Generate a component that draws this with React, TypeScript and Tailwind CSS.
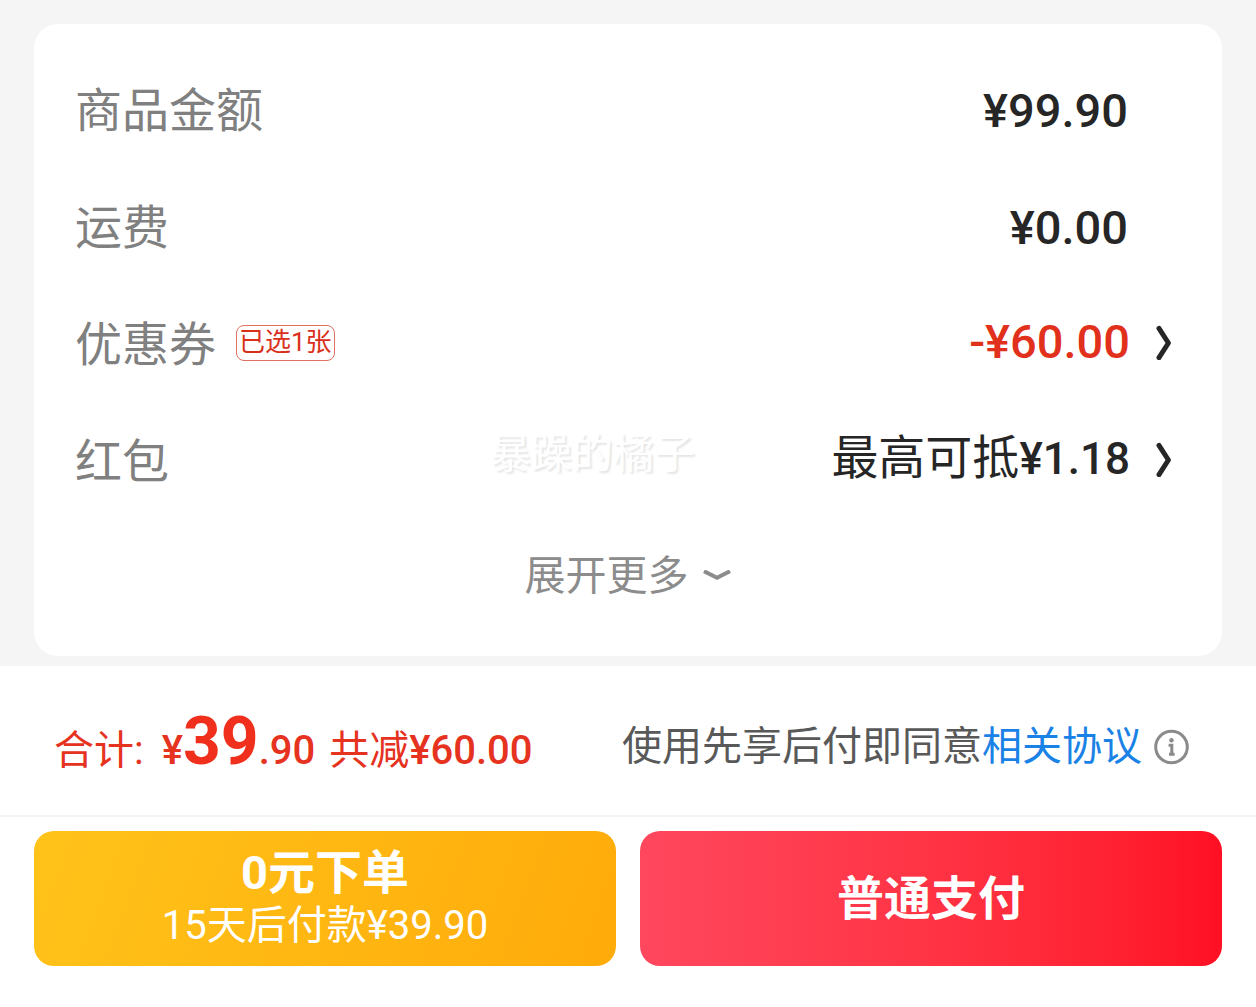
import type { ReactNode } from "react";

interface FeeRowProps {
  label: string;
  tag?: string;
  children: ReactNode;
}

function FeeRow({ label, tag, children }: FeeRowProps) {
  return (
    <div className="flex h-[117px] items-center justify-between">
      <dt className="flex items-center text-[47px] leading-[60px] text-[#808080]">
        {label}
        {tag && (
          <span className="mb-1 ml-5 flex h-9 items-center rounded-lg border border-[#e0705f] px-0.5 pb-0.5 text-[26px] leading-[30px] text-[#d9301c]">
            {tag}
          </span>
        )}
      </dt>
      <dd className="text-[47px] leading-[60px] text-[#262626]">{children}</dd>
    </div>
  );
}

function ArrowRight() {
  return (
    <svg viewBox="0 0 16 36" className="h-9 w-4" fill="none" aria-hidden>
      <path
        d="M3 4.4 12.4 19 3 33.6"
        stroke="#262626"
        strokeWidth="5"
        strokeLinecap="round"
        strokeLinejoin="round"
      />
    </svg>
  );
}

function ArrowDown() {
  return (
    <svg viewBox="0 0 28 12" className="h-3 w-7" fill="none" aria-hidden>
      <path d="M1 1.2 14 7.8 27 1.2" stroke="#8c8c8c" strokeWidth="4" />
    </svg>
  );
}

function InfoIcon() {
  return (
    <svg viewBox="0 0 36 36" className="size-9" fill="none" aria-hidden>
      <circle cx="17.5" cy="18" r="15.8" stroke="#8a8a8a" strokeWidth="3" />
      <circle cx="17.5" cy="11.2" r="2.2" fill="#8a8a8a" />
      <path d="M14.6 16.2H17.8V25M15 25.2H20.6" stroke="#8a8a8a" strokeWidth="3" />
    </svg>
  );
}

export default function App() {
  return (
    <div className="min-h-screen bg-white font-['Roboto','Noto_Sans_CJK_SC',sans-serif]">
      <main className="bg-[#f5f5f5] px-[34px] pt-6 pb-2.5">
        <section className="relative rounded-3xl bg-white pt-7 pr-[42px] pb-[50px] pl-[41px]">
          <dl>
            <FeeRow label="商品金额">
              <span className="mr-[52px] font-medium">¥99.90</span>
            </FeeRow>
            <FeeRow label="运费">
              <span className="mr-[52px] font-medium">¥0.00</span>
            </FeeRow>
            <FeeRow label="优惠券" tag="已选1张">
              <button type="button" className="mr-2 mb-1.5 flex items-center gap-[26px] font-medium text-[#e1301c]">
                -¥60.00
                <ArrowRight />
              </button>
            </FeeRow>
            <FeeRow label="红包">
              <button type="button" className="mr-2 mb-1.5 flex items-center gap-[26px]">
                <span>
                  最高可抵<span className="text-[44px] font-medium">¥1.18</span>
                </span>
                <ArrowRight />
              </button>
            </FeeRow>
          </dl>
          <button
            type="button"
            className="mx-auto mt-[26px] flex items-center gap-3.5 text-[41px] leading-[60px] text-[#8c8c8c]"
          >
            展开更多
            <ArrowDown />
          </button>
          <span className="pointer-events-none absolute top-[400px] left-[456px] text-[41px] leading-[60px] text-white [text-shadow:2px_2px_2px_#e6e6e6]">
            暴躁的橘子
          </span>
        </section>
      </main>

      <footer>
        <div className="flex h-[151px] items-center justify-between border-b-2 border-[#f3f3f3] pt-3 pr-[66px] pl-[54px]">
          <p className="flex items-baseline text-[40px] leading-[60px] text-[#e6331f]">
            <span>合计:</span>
            <span className="ml-[18px] font-medium">
              ¥<span className="text-[66px] font-bold text-[#f0301c]">39</span>.90
            </span>
            <span className="ml-3.5">
              共减<span className="font-medium">¥60.00</span>
            </span>
          </p>
          <p className="flex items-center text-[40px] leading-[60px] text-[#595959]">
            使用先享后付即同意
            <a href="#agreement" className="text-[#1a82e6]">
              相关协议
            </a>
            <button type="button" aria-label="协议说明" className="ml-3">
              <InfoIcon />
            </button>
          </p>
        </div>
        <div className="grid grid-cols-2 gap-6 px-[34px] pt-3.5 pb-10 text-white">
          <button
            type="button"
            className="flex h-[135px] flex-col items-center justify-center rounded-[20px] bg-linear-[110deg] from-[#ffc31a] to-[#ffab0a]"
          >
            <span className="text-[47px] leading-[54px] font-bold">0元下单</span>
            <span className="text-[40px] leading-[52px]">15天后付款¥39.90</span>
          </button>
          <button
            type="button"
            className="flex h-[135px] items-center justify-center rounded-[20px] bg-linear-to-r from-[#ff475d] to-[#ff0f23] text-[47px] leading-[60px] font-bold"
          >
            普通支付
          </button>
        </div>
      </footer>
    </div>
  );
}
